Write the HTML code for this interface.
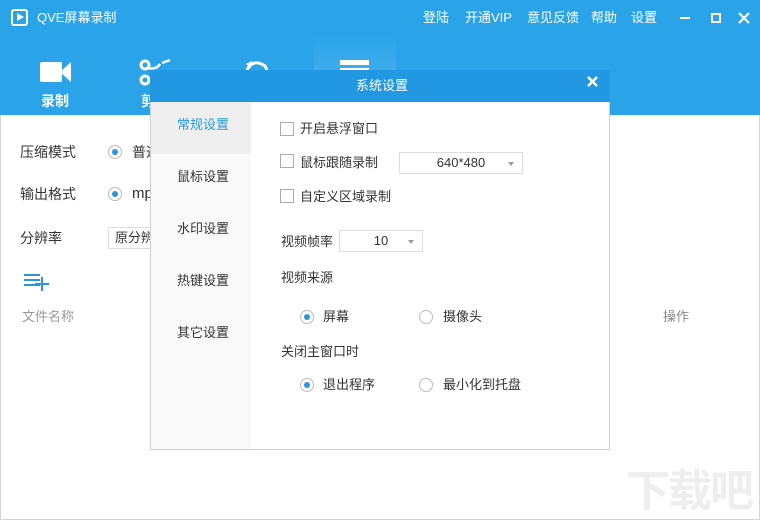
<!DOCTYPE html>
<html><head><meta charset="utf-8"><style>
*{margin:0;padding:0;box-sizing:border-box}
body{width:760px;height:520px;overflow:hidden;background:#fff;font-family:"Liberation Sans","Noto Sans CJK SC",sans-serif;font-size:13px;line-height:1.1;color:#333;position:relative}
.a{position:absolute;white-space:nowrap}
.hdr{left:0;top:0;width:760px;height:115px;background:#2ba3e9}
.w{color:#fff}
.radio{width:14px;height:14px;border:1px solid #bbb;border-radius:50%;background:#fff}
.radio.on::after{content:"";position:absolute;left:3px;top:3px;width:6px;height:6px;border-radius:50%;background:#2a97dc}
.cb{width:14px;height:14px;border:1px solid #aaa;background:#fff}
.sel{border:1px solid #ddd;background:#fff;text-align:center;font-size:13px;line-height:20px}
.sel::after{content:"";position:absolute;right:8px;top:9px;border:3.5px solid transparent;border-top:4px solid #999}
</style></head><body>
<div class="a" style="left:0;top:115px;width:760px;height:405px;border:1px solid #d5d5d5;border-top:none"></div>
<div class="a hdr"></div>
<div class="a" style="left:314px;top:35px;width:82px;height:80px;background:linear-gradient(#2ba3e9,#55b8f0)"></div>
<div class="a" style="left:11px;top:9px;width:17px;height:17px;border:2px solid #fff;border-radius:3px"></div>
<div class="a" style="left:17px;top:13px;width:0;height:0;border-left:7px solid #fff;border-top:4.5px solid transparent;border-bottom:4.5px solid transparent"></div>
<div class="a w" style="left:37px;top:11px;font-size:13px">QVE屏幕录制</div>
<div class="a w" style="left:423px;top:11px">登陆</div>
<div class="a w" style="left:465px;top:11px">开通VIP</div>
<div class="a w" style="left:527px;top:11px">意见反馈</div>
<div class="a w" style="left:591px;top:11px">帮助</div>
<div class="a w" style="left:631px;top:11px">设置</div>
<div class="a" style="left:680px;top:17px;width:10px;height:2px;background:#fff"></div>
<div class="a" style="left:711px;top:13px;width:10px;height:10px;border:2px solid #fff"></div>
<svg class="a" style="left:738px;top:12px" width="12" height="12"><path d="M1 1L11 11M11 1L1 11" stroke="#fff" stroke-width="2.2"/></svg>
<div class="a" style="left:40px;top:62px;width:22px;height:20px;background:#fff;border-radius:2px"></div>
<div class="a" style="left:60px;top:62px;width:0;height:0;border-right:11px solid #fff;border-top:10px solid transparent;border-bottom:10px solid transparent"></div>
<div class="a w" style="left:41px;top:94px;font-weight:bold;font-size:14px">录制</div>
<svg class="a" style="left:138px;top:58px" width="36" height="30"><circle cx="7" cy="7" r="4" fill="none" stroke="#fff" stroke-width="3"/><circle cx="7" cy="22" r="4" fill="none" stroke="#fff" stroke-width="3"/><path d="M10 10 Q18 12 22 6 M24 5 L32 2" fill="none" stroke="#fff" stroke-width="2.5"/></svg>
<div class="a w" style="left:141px;top:94px;font-weight:bold;font-size:14px">剪</div>
<svg class="a" style="left:243px;top:58px" width="30" height="14"><path d="M4 12 Q10 0 22 8 L24 12" fill="none" stroke="#fff" stroke-width="3"/><path d="M3 6 L9 3 L8 10Z" fill="#fff"/></svg>
<div class="a" style="left:340px;top:60px;width:29px;height:5px;background:#fff"></div>
<div class="a" style="left:340px;top:68px;width:29px;height:2px;background:#fff"></div>
<div class="a" style="left:20px;top:145px;font-size:14px">压缩模式</div>
<div class="a radio on" style="left:108px;top:145px"></div>
<div class="a" style="left:132px;top:145px;font-size:14px">普通</div>
<div class="a" style="left:20px;top:187px;font-size:14px">输出格式</div>
<div class="a radio on" style="left:108px;top:187px"></div>
<div class="a" style="left:132px;top:186px;font-size:15px">mp4</div>
<div class="a" style="left:20px;top:231px;font-size:14px">分辨率</div>
<div class="a" style="left:108px;top:227px;width:60px;height:22px;border:1px solid #ddd;padding:3px 6px;font-size:13px">原分辨率</div>
<div class="a" style="left:24px;top:274px;width:16px;height:2px;background:#2a97dc;box-shadow:0 5px 0 #2a97dc,0 10px 0 #2a97dc"></div>
<div class="a" style="left:35px;top:283px;width:14px;height:2px;background:#2a97dc"></div>
<div class="a" style="left:41px;top:277px;width:2px;height:14px;background:#2a97dc"></div>
<div class="a" style="left:22px;top:310px;color:#999">文件名称</div>
<div class="a" style="left:663px;top:310px;color:#888">操作</div>
<div class="a" style="left:150px;top:70px;width:460px;height:380px;background:#fff;border:1px solid #d0d0d0;border-top:none"></div>
<div class="a" style="left:150px;top:70px;width:460px;height:32px;background:#2298e2"></div>
<div class="a w" style="left:356px;top:79px;font-size:13px">系统设置</div>
<svg class="a" style="left:587px;top:76px" width="11" height="11"><path d="M1 1L10 10M10 1L1 10" stroke="#fff" stroke-width="2.4"/></svg>
<div class="a" style="left:151px;top:102px;width:100px;height:347px;background:#f9f9f9"></div>
<div class="a" style="left:151px;top:102px;width:100px;height:52px;background:#efefef"></div>
<div class="a" style="left:177px;top:118px;color:#2a97dc">常规设置</div>
<div class="a" style="left:177px;top:170px">鼠标设置</div>
<div class="a" style="left:177px;top:222px">水印设置</div>
<div class="a" style="left:177px;top:274px">热键设置</div>
<div class="a" style="left:177px;top:326px">其它设置</div>
<div class="a cb" style="left:280px;top:122px"></div>
<div class="a" style="left:300px;top:122px">开启悬浮窗口</div>
<div class="a cb" style="left:280px;top:154px"></div>
<div class="a" style="left:300px;top:156px">鼠标跟随录制</div>
<div class="a sel" style="left:399px;top:152px;width:124px;height:22px">640*480</div>
<div class="a cb" style="left:280px;top:189px"></div>
<div class="a" style="left:300px;top:190px">自定义区域录制</div>
<div class="a" style="left:281px;top:235px">视频帧率</div>
<div class="a sel" style="left:339px;top:230px;width:84px;height:22px">10</div>
<div class="a" style="left:281px;top:271px">视频来源</div>
<div class="a radio on" style="left:300px;top:310px"></div>
<div class="a" style="left:323px;top:310px">屏幕</div>
<div class="a radio" style="left:419px;top:310px"></div>
<div class="a" style="left:443px;top:310px">摄像头</div>
<div class="a" style="left:281px;top:345px">关闭主窗口时</div>
<div class="a radio on" style="left:300px;top:378px"></div>
<div class="a" style="left:323px;top:378px">退出程序</div>
<div class="a radio" style="left:419px;top:378px"></div>
<div class="a" style="left:443px;top:378px">最小化到托盘</div>
<div class="a" style="left:626px;top:468px;font-size:44px;color:#eee;font-weight:bold;letter-spacing:-2px">下载吧</div>
</body></html>
